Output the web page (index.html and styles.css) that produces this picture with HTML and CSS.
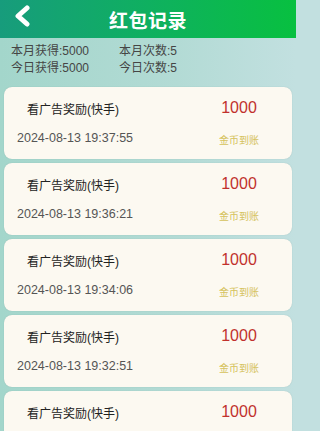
FILE: index.html
```html
<!DOCTYPE html>
<html lang="zh">
<head>
<meta charset="utf-8">
<link rel="stylesheet" href="styles.css">
</head>
<body>
<div class="page">
  <header class="topbar">
    <svg class="back" width="20" height="22" viewBox="0 0 20 22"><path d="M14 3 L5 11 L14 19" fill="none" stroke="#fff" stroke-width="5" stroke-linecap="round" stroke-linejoin="round"/></svg>
    <h1 class="title">红包记录</h1>
  </header>
  <section class="stats">
    <div class="stat-row"><span class="stat">本月获得:5000</span><span class="stat">本月次数:5</span></div>
    <div class="stat-row"><span class="stat">今日获得:5000</span><span class="stat">今日次数:5</span></div>
  </section>
  <main class="list">
    <div class="card"><div class="row"><span class="name">看广告奖励(快手)</span><span class="amount">1000</span></div><div class="row"><span class="time">2024-08-13 19:37:55</span><span class="status">金币到账</span></div></div>
    <div class="card"><div class="row"><span class="name">看广告奖励(快手)</span><span class="amount">1000</span></div><div class="row"><span class="time">2024-08-13 19:36:21</span><span class="status">金币到账</span></div></div>
    <div class="card"><div class="row"><span class="name">看广告奖励(快手)</span><span class="amount">1000</span></div><div class="row"><span class="time">2024-08-13 19:34:06</span><span class="status">金币到账</span></div></div>
    <div class="card"><div class="row"><span class="name">看广告奖励(快手)</span><span class="amount">1000</span></div><div class="row"><span class="time">2024-08-13 19:32:51</span><span class="status">金币到账</span></div></div>
    <div class="card"><div class="row"><span class="name">看广告奖励(快手)</span><span class="amount">1000</span></div><div class="row"><span class="time">2024-08-13 19:31:10</span><span class="status">金币到账</span></div></div>
  </main>
</div>
</body>
</html>
```
FILE: styles.css
```css
html, body { margin: 0; padding: 0; }
html { background: #c2e0e0; }
body {
  width: 296px;
  height: 431px;
  overflow: hidden;
  font-family: "Liberation Sans", "Noto Sans CJK SC", sans-serif;
  background: linear-gradient(90deg, #a3d6cb 0%, #b3dbd5 60%, #c2e0e0 100%);
}
.page { display: flex; flex-direction: column; }
.topbar {
  height: 38px;
  display: flex;
  align-items: center;
  justify-content: center;
  position: relative;
  background: linear-gradient(90deg, #179c7c 0%, #0fb060 50%, #08c040 100%);
}
.back { position: absolute; left: 13px; top: 5px; }
.title {
  margin: 0;
  color: #fff;
  font-size: 19px;
  font-weight: bold;
  letter-spacing: 0.5px;
  font-family: "Noto Sans CJK SC", sans-serif;
}
.stats {
  height: 49px;
  box-sizing: border-box;
  padding: 5px 0 0 11px;
  color: #454545;
  font-size: 12px;
}
.stat-row { display: flex; height: 17px; line-height: 17px; }
.stat { width: 108px; }
.list { display: flex; flex-direction: column; gap: 4px; padding: 0 4px; }
.card {
  height: 72px;
  flex: none;
  box-sizing: border-box;
  background: #fcf9f1;
  border-radius: 8px;
  padding: 12px 29px 0 13px;
  box-shadow: 0 0 1px rgba(80,130,130,0.4);
}
.row { display: flex; justify-content: space-between; align-items: center; height: 18px; }
.row + .row { margin-top: 12px; }
.name { padding-left: 10px; font-size: 12px; color: #222; }
.amount { width: 48px; text-align: center; font-size: 16px; color: #c1312d; }
.time { font-size: 12.5px; color: #555; }
.status { width: 48px; text-align: center; font-size: 10px; color: #d5c25c; padding-top: 3px; }
```
